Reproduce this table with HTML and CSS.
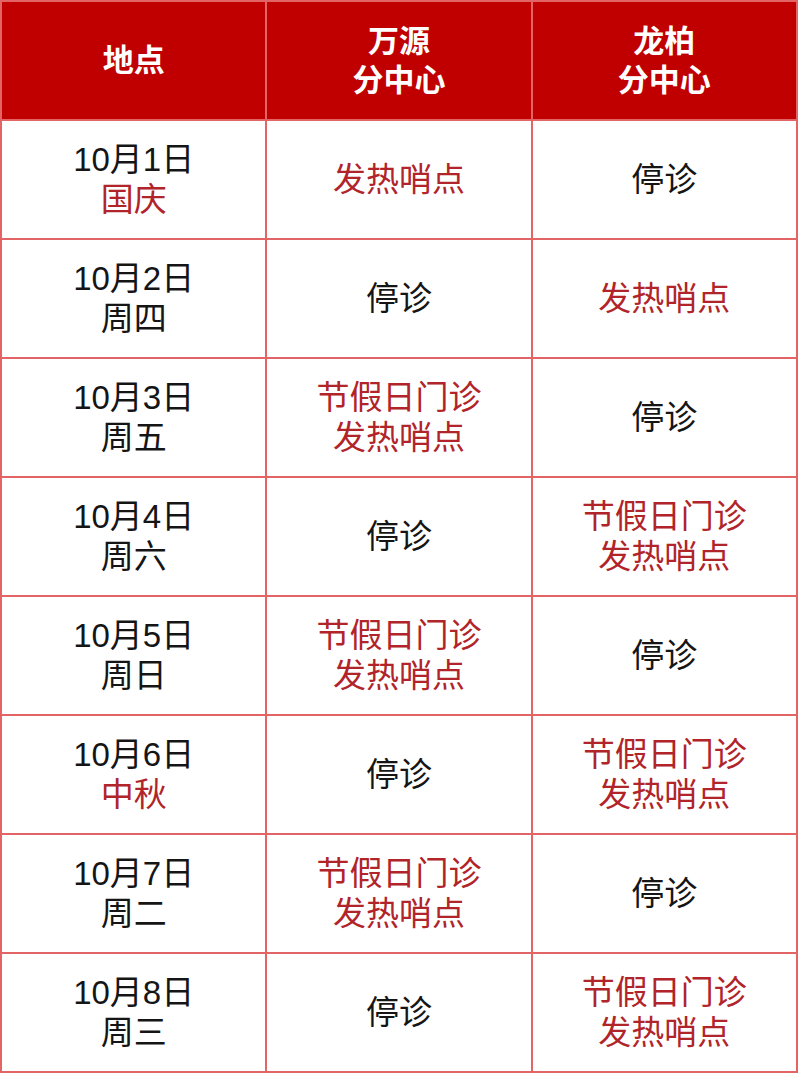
FILE: index.html
```html
<!DOCTYPE html>
<html lang="zh-CN">
<head>
<meta charset="utf-8">
<link rel="stylesheet" href="styles.css">
</head>
<body>
<div class="sheet">
  <div class="cell head"><div>地点</div></div>
  <div class="cell head"><div>万源<br>分中心</div></div>
  <div class="cell head"><div>龙柏<br>分中心</div></div>

  <div class="cell"><div>10月1日<br><span class="red">国庆</span></div></div>
  <div class="cell red"><div>发热哨点</div></div>
  <div class="cell"><div>停诊</div></div>

  <div class="cell"><div>10月2日<br>周四</div></div>
  <div class="cell"><div>停诊</div></div>
  <div class="cell red"><div>发热哨点</div></div>

  <div class="cell"><div>10月3日<br>周五</div></div>
  <div class="cell red"><div>节假日门诊<br>发热哨点</div></div>
  <div class="cell"><div>停诊</div></div>

  <div class="cell"><div>10月4日<br>周六</div></div>
  <div class="cell"><div>停诊</div></div>
  <div class="cell red"><div>节假日门诊<br>发热哨点</div></div>

  <div class="cell"><div>10月5日<br>周日</div></div>
  <div class="cell red"><div>节假日门诊<br>发热哨点</div></div>
  <div class="cell"><div>停诊</div></div>

  <div class="cell"><div>10月6日<br><span class="red">中秋</span></div></div>
  <div class="cell"><div>停诊</div></div>
  <div class="cell red"><div>节假日门诊<br>发热哨点</div></div>

  <div class="cell"><div>10月7日<br>周二</div></div>
  <div class="cell red"><div>节假日门诊<br>发热哨点</div></div>
  <div class="cell"><div>停诊</div></div>

  <div class="cell"><div>10月8日<br>周三</div></div>
  <div class="cell"><div>停诊</div></div>
  <div class="cell red"><div>节假日门诊<br>发热哨点</div></div>
</div>
</body>
</html>
```

FILE: styles.css
```css
html, body {
  margin: 0;
  padding: 0;
  background: #ffffff;
}

body {
  font-family: "Liberation Sans", "Noto Sans CJK SC", sans-serif;
}

.sheet {
  width: 798px;
  box-sizing: border-box;
  display: grid;
  grid-template-columns: 1fr 1fr 1fr;
  grid-template-rows: 117px repeat(8, 117px);
  gap: 2px;
  padding: 2px;
  background: #e26464;
}

.cell {
  background: #ffffff;
  display: flex;
  align-items: center;
  justify-content: center;
  text-align: center;
  font-size: 33px;
  line-height: 40px;
  color: #151515;
}

.cell.head {
  background: #c00000;
  color: #ffffff;
  font-weight: 700;
  font-size: 31px;
  line-height: 39px;
}

.red {
  color: #b0242a;
}
```
